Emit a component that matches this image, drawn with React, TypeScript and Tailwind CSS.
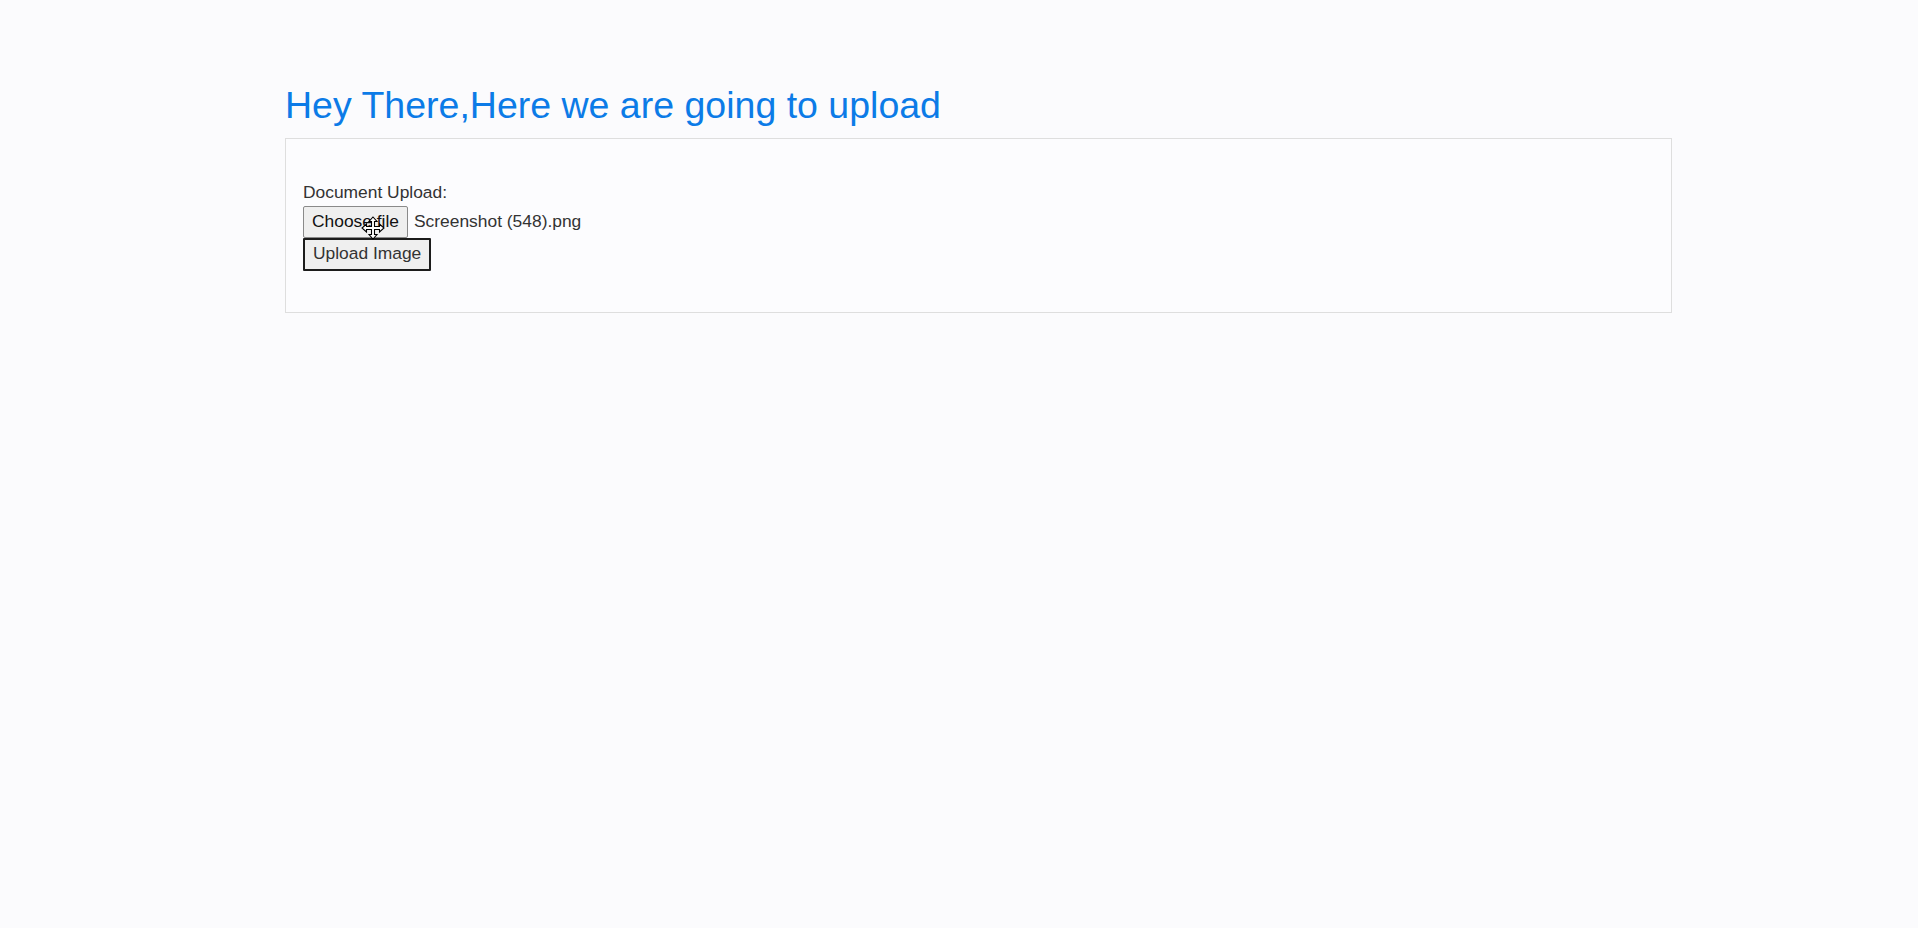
import React from "react";

function MoveCursor() {
  return (
    <svg
      width="24"
      height="24"
      viewBox="0 0 24 24"
      className="absolute left-[58px] top-[10px] pointer-events-none"
    >
      <path
        d="M12 1 L16 5.5 H13.5 V10.5 H18.5 V8 L23 12 L18.5 16 V13.5 H13.5 V18.5 H16 L12 23 L8 18.5 H10.5 V13.5 H5.5 V16 L1 12 L5.5 8 V10.5 H10.5 V5.5 H8 Z"
        fill="#ffffff"
        stroke="#000000"
        strokeWidth="1.1"
        strokeLinejoin="miter"
      />
    </svg>
  );
}

export default function App() {
  return (
    <div
      className="min-h-[928px] w-full bg-[#fbfbfd] pt-[83px]"
      style={{ fontFamily: '"Liberation Sans", Arial, sans-serif' }}
    >
      <div className="ml-[285px] w-[1387px]">
        <h1 className="mb-[10px] text-[37.5px] leading-[1.2] font-normal text-[#0c7be7]">
          Hey There,Here we are going to upload
        </h1>
        <div className="border border-[#dedede] bg-[#fcfcfe] px-[17px] pt-[40px] pb-[41px]">
          <div className="flex flex-col items-start text-[17.4px] leading-[26.5px] text-[#333333]">
            <label>Document Upload:</label>
            <div className="relative flex items-center">
              <button className="h-[32px] rounded-[2px] border border-[#8a8a8a] bg-[#efefef] px-[8px] text-[17.4px] leading-none text-[#111111]">
                Choose file
              </button>
              <span className="ml-[6px] text-[17.4px] text-[#333333]">
                Screenshot (548).png
              </span>
              <MoveCursor />
            </div>
            <button className="h-[33px] rounded-[1px] border-2 border-[#1c1c1c] bg-[#efefef] px-[8px] text-[17.4px] leading-none text-[#333333]">
              Upload Image
            </button>
          </div>
        </div>
      </div>
    </div>
  );
}
